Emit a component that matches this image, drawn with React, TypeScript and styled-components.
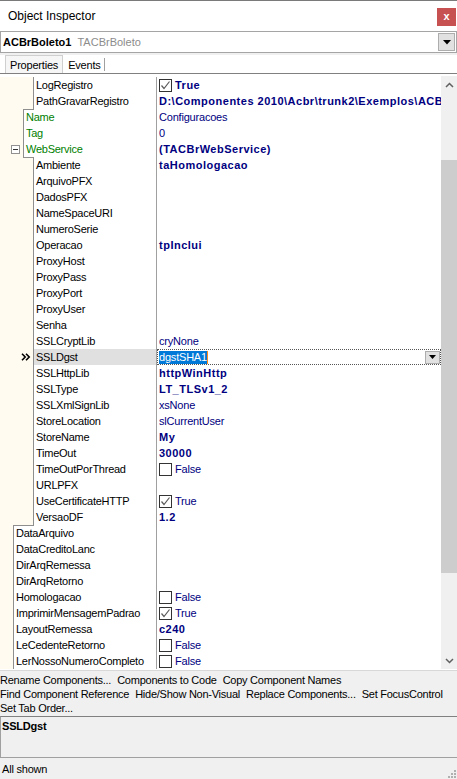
import React from "react";
import styled, { createGlobalStyle } from "styled-components";

const GlobalStyle = createGlobalStyle`
  html, body {
    margin: 0;
    padding: 0;
    background: #ffffff;
  }
  body {
    font-family: "Liberation Sans", Arial, sans-serif;
  }
  * {
    box-sizing: border-box;
  }
`;

type Value =
  | { kind: "text"; text: string; bold?: boolean }
  | { kind: "check"; checked: boolean; bold?: boolean }
  | { kind: "edit"; text: string }
  | { kind: "none" };

type Prop = {
  name: string;
  level: 0 | 1 | 2;
  value: Value;
  green?: boolean;
  expanded?: boolean;
  selected?: boolean;
};

const none: Value = { kind: "none" };
const t = (text: string, bold = false): Value => ({ kind: "text", text, bold });
const c = (checked: boolean, bold = false): Value => ({ kind: "check", checked, bold });

const props: Prop[] = [
  { name: "LogRegistro", level: 2, value: c(true, true) },
  {
    name: "PathGravarRegistro",
    level: 2,
    value: t("D:\\Componentes 2010\\Acbr\\trunk2\\Exemplos\\ACBrBoleto", true),
  },
  { name: "Name", level: 1, green: true, value: t("Configuracoes") },
  { name: "Tag", level: 1, green: true, value: t("0") },
  { name: "WebService", level: 1, green: true, expanded: true, value: t("(TACBrWebService)", true) },
  { name: "Ambiente", level: 2, value: t("taHomologacao", true) },
  { name: "ArquivoPFX", level: 2, value: none },
  { name: "DadosPFX", level: 2, value: none },
  { name: "NameSpaceURI", level: 2, value: none },
  { name: "NumeroSerie", level: 2, value: none },
  { name: "Operacao", level: 2, value: t("tpInclui", true) },
  { name: "ProxyHost", level: 2, value: none },
  { name: "ProxyPass", level: 2, value: none },
  { name: "ProxyPort", level: 2, value: none },
  { name: "ProxyUser", level: 2, value: none },
  { name: "Senha", level: 2, value: none },
  { name: "SSLCryptLib", level: 2, value: t("cryNone") },
  { name: "SSLDgst", level: 2, selected: true, value: { kind: "edit", text: "dgstSHA1" } },
  { name: "SSLHttpLib", level: 2, value: t("httpWinHttp", true) },
  { name: "SSLType", level: 2, value: t("LT_TLSv1_2", true) },
  { name: "SSLXmlSignLib", level: 2, value: t("xsNone") },
  { name: "StoreLocation", level: 2, value: t("slCurrentUser") },
  { name: "StoreName", level: 2, value: t("My", true) },
  { name: "TimeOut", level: 2, value: t("30000", true) },
  { name: "TimeOutPorThread", level: 2, value: c(false) },
  { name: "URLPFX", level: 2, value: none },
  { name: "UseCertificateHTTP", level: 2, value: c(true) },
  { name: "VersaoDF", level: 2, value: t("1.2", true) },
  { name: "DataArquivo", level: 0, value: none },
  { name: "DataCreditoLanc", level: 0, value: none },
  { name: "DirArqRemessa", level: 0, value: none },
  { name: "DirArqRetorno", level: 0, value: none },
  { name: "Homologacao", level: 0, value: c(false) },
  { name: "ImprimirMensagemPadrao", level: 0, value: c(true) },
  { name: "LayoutRemessa", level: 0, value: t("c240", true) },
  { name: "LeCedenteRetorno", level: 0, value: c(false) },
  { name: "LerNossoNumeroCompleto", level: 0, value: c(false) },
];

const gutterWidth = [14, 24, 34];

const actions = [
  "Rename Components...",
  "Components to Code",
  "Copy Component Names",
  "Find Component Reference",
  "Hide/Show Non-Visual",
  "Replace Components...",
  "Set FocusControl",
  "Set Tab Order...",
];

export default function App() {
  return (
    <Window>
      <GlobalStyle />
      <TitleBar>
        <Title>Object Inspector</Title>
        <CloseButton>x</CloseButton>
      </TitleBar>

      <Combo>
        <ComboName>ACBrBoleto1</ComboName>
        <ComboType>TACBrBoleto</ComboType>
        <ComboButton>
          <svg width="8" height="5" viewBox="0 0 8 5">
            <polygon points="0,0 8,0 4,4.5" fill="#000" />
          </svg>
        </ComboButton>
      </Combo>

      <TabStrip>
        <Tab $active>Properties</Tab>
        <Tab>Events</Tab>
      </TabStrip>

      <GridArea>
        <Rows>
          {props.map((p, i) => {
            const w = gutterWidth[p.level];
            const prev = i === 0 ? w : gutterWidth[props[i - 1].level];
            return (
              <Row key={p.name}>
                <NameCol>
                  <Gutter $w={w} $prev={prev}>
                    {p.expanded && (
                      <ExpandBox>
                        <ExpandLine />
                      </ExpandBox>
                    )}
                    {p.selected && (
                      <Marker width="10" height="8" viewBox="0 0 10 8">
                        <path d="M1 0.8 L4.2 4 L1 7.2 M5 0.8 L8.2 4 L5 7.2" fill="none" stroke="#000" strokeWidth="1.6" />
                      </Marker>
                    )}
                  </Gutter>
                  <NameCell $selected={!!p.selected} $green={!!p.green}>
                    {p.name}
                  </NameCell>
                </NameCol>
                <ValueCell $edit={p.value.kind === "edit"}>
                  <ValueContent value={p.value} />
                </ValueCell>
              </Row>
            );
          })}
        </Rows>
        <Scrollbar>
          <ScrollArrow>
            <svg width="9" height="6" viewBox="0 0 9 6">
              <polyline points="1,5 4.5,1.5 8,5" fill="none" stroke="#606060" strokeWidth="1.5" />
            </svg>
          </ScrollArrow>
          <Track>
            <Thumb $top={67} $height={413} />
          </Track>
          <ScrollArrow>
            <svg width="9" height="6" viewBox="0 0 9 6">
              <polyline points="1,1 4.5,4.5 8,1" fill="none" stroke="#606060" strokeWidth="1.5" />
            </svg>
          </ScrollArrow>
        </Scrollbar>
      </GridArea>

      <Actions>
        {actions.map((a) => (
          <ActionLink key={a}>{a}</ActionLink>
        ))}
      </Actions>

      <Description>SSLDgst</Description>

      <StatusBar>
        <span>All shown</span>
        <Grip width="8" height="8" viewBox="0 0 8 8">
          <rect x="6" y="0" width="2" height="2" fill="#b0b0b0" />
          <rect x="3" y="3" width="2" height="2" fill="#b0b0b0" />
          <rect x="6" y="3" width="2" height="2" fill="#b0b0b0" />
          <rect x="0" y="6" width="2" height="2" fill="#b0b0b0" />
          <rect x="3" y="6" width="2" height="2" fill="#b0b0b0" />
          <rect x="6" y="6" width="2" height="2" fill="#b0b0b0" />
        </Grip>
      </StatusBar>
    </Window>
  );
}

function ValueContent({ value }: { value: Value }) {
  if (value.kind === "text") {
    return <ValueText $bold={!!value.bold}>{value.text}</ValueText>;
  }
  if (value.kind === "check") {
    return (
      <>
        <CheckBox>
          {value.checked && (
            <svg width="11" height="11" viewBox="0 0 11 11">
              <polyline points="1.5,5.5 4,8.5 9.5,1.5" fill="none" stroke="#5a5a5a" strokeWidth="1.2" />
            </svg>
          )}
        </CheckBox>
        <ValueText $bold={!!value.bold}>{value.checked ? "True" : "False"}</ValueText>
      </>
    );
  }
  if (value.kind === "edit") {
    return (
      <EditBox>
        <Selection>{value.text}</Selection>
        <Caret />
        <EditButton>
          <svg width="7" height="4" viewBox="0 0 7 4">
            <polygon points="0,0 7,0 3.5,4" fill="#000" />
          </svg>
        </EditButton>
      </EditBox>
    );
  }
  return null;
}

const Window = styled.div`
  width: 457px;
  height: 779px;
  display: flex;
  flex-direction: column;
  background: #ffffff;
  overflow: hidden;
  font-size: 11px;
  color: #000;
`;

const TitleBar = styled.div`
  height: 31px;
  flex: none;
  border-top: 1px solid #7a7a7a;
  display: flex;
  align-items: center;
  justify-content: space-between;
  padding: 0 1px 0 8px;
`;

const Title = styled.span`
  font-size: 12px;
  color: #000;
`;

const CloseButton = styled.div`
  width: 19px;
  height: 18px;
  margin-top: 2px;
  background: #c75050;
  color: #ffffff;
  font-weight: bold;
  font-size: 11px;
  display: flex;
  align-items: center;
  justify-content: center;
  padding-bottom: 2px;
`;

const Combo = styled.div`
  height: 22px;
  flex: none;
  border: 1px solid #a5a5a5;
  display: flex;
  align-items: center;
  padding-left: 2px;
`;

const ComboName = styled.span`
  font-weight: bold;
  font-size: 11px;
`;

const ComboType = styled.span`
  margin-left: 6px;
  color: #8c8c8c;
  font-size: 11px;
`;

const ComboButton = styled.div`
  margin-left: auto;
  margin-right: 1px;
  width: 17px;
  height: 18px;
  background: #e1e1e1;
  border: 1px solid #adadad;
  display: flex;
  align-items: center;
  justify-content: center;
`;

const TabStrip = styled.div`
  height: 21px;
  flex: none;
  border-top: 2px solid #f0f0f0;
  border-bottom: 1px solid #808080;
  display: flex;
  align-items: flex-end;
  padding-left: 5px;
`;

const Tab = styled.div<{ $active?: boolean }>`
  height: 18px;
  display: flex;
  align-items: center;
  padding: 0 4px;
  font-size: 11px;
  letter-spacing: -0.2px;
  border: 1px solid ${(p) => (p.$active ? "#cfcfcf" : "transparent")};
  border-bottom: none;
  background: ${(p) => (p.$active ? "#f6f6f6" : "transparent")};
  ${(p) =>
    !p.$active &&
    `
    position: relative;
    &::after {
      content: "";
      position: absolute;
      right: 0;
      top: 2px;
      height: 13px;
      border-right: 1px solid #a0a0a0;
    }
  `}
`;

const GridArea = styled.div`
  height: 596px;
  flex: none;
  display: flex;
`;

const Rows = styled.div`
  flex: 1;
  min-width: 0;
  padding-top: 3px;
  display: flex;
  flex-direction: column;
`;

const Row = styled.div`
  height: 16px;
  flex: none;
  display: flex;
`;

const NameCol = styled.div`
  width: 156px;
  flex: none;
  display: flex;
`;

const Gutter = styled.div<{ $w: number; $prev: number }>`
  position: relative;
  flex: none;
  width: ${(p) => p.$w}px;
  height: 100%;
  background: #fffbf0;
  border-right: 1px solid #8e8e8e;
  display: flex;
  align-items: center;
  ${(p) =>
    p.$prev !== p.$w &&
    `
    &::before {
      content: "";
      position: absolute;
      top: 0;
      left: ${Math.min(p.$w, p.$prev) - 1}px;
      width: ${Math.abs(p.$w - p.$prev) + 1}px;
      border-top: 1px solid #8e8e8e;
    }
  `}
`;

const ExpandBox = styled.div`
  margin-left: 11px;
  width: 9px;
  height: 9px;
  border: 1px solid #919191;
  background: #ffffff;
  display: flex;
  align-items: center;
  justify-content: center;
`;

const ExpandLine = styled.div`
  width: 5px;
  height: 1px;
  background: #333333;
`;

const Marker = styled.svg`
  margin-left: 21px;
`;

const NameCell = styled.div<{ $selected: boolean; $green: boolean }>`
  flex: 1;
  min-width: 0;
  padding-left: 2px;
  line-height: 16px;
  white-space: nowrap;
  overflow: hidden;
  letter-spacing: -0.25px;
  color: ${(p) => (p.$green ? "#008000" : "#000000")};
  background: ${(p) => (p.$selected ? "#e0e0e0" : "transparent")};
`;

const ValueCell = styled.div<{ $edit: boolean }>`
  flex: 1;
  min-width: 0;
  border-left: 1px solid #a0a0a0;
  padding-left: ${(p) => (p.$edit ? 0 : 2)}px;
  display: flex;
  align-items: center;
  overflow: hidden;
  white-space: nowrap;
  color: #000080;
`;

const ValueText = styled.span<{ $bold: boolean }>`
  line-height: 16px;
  font-weight: ${(p) => (p.$bold ? "bold" : "normal")};
  letter-spacing: ${(p) => (p.$bold ? "0.5px" : "-0.2px")};
`;

const CheckBox = styled.div`
  width: 13px;
  height: 13px;
  flex: none;
  margin-right: 3px;
  border: 1px solid #333333;
  background: #ffffff;
  display: flex;
  align-items: center;
  justify-content: center;
`;

const EditBox = styled.div`
  flex: 1;
  height: 16px;
  border: 1px dotted #555555;
  display: flex;
  align-items: center;
  padding-left: 1px;
`;

const Selection = styled.span`
  background: #0078d7;
  color: #ffffff;
  line-height: 13px;
  letter-spacing: -0.2px;
`;

const Caret = styled.span`
  width: 1px;
  height: 13px;
  background: #ff8c1a;
`;

const EditButton = styled.div`
  margin-left: auto;
  width: 15px;
  height: 13px;
  background: #e1e1e1;
  border: 1px solid #adadad;
  display: flex;
  align-items: center;
  justify-content: center;
`;

const Scrollbar = styled.div`
  width: 16px;
  flex: none;
  margin-top: 2px;
  height: 593px;
  background: #f0f0f0;
  display: flex;
  flex-direction: column;
`;

const ScrollArrow = styled.div`
  height: 17px;
  flex: none;
  display: flex;
  align-items: center;
  justify-content: center;
`;

const Track = styled.div`
  flex: 1;
  display: flex;
  flex-direction: column;
`;

const Thumb = styled.div<{ $top: number; $height: number }>`
  margin-top: ${(p) => p.$top}px;
  height: ${(p) => p.$height}px;
  background: #cdcdcd;
`;

const Actions = styled.div`
  height: 46px;
  flex: none;
  background: #f0f0f0;
  border-top: 1px solid #d8d8d8;
  padding: 2px 0 0 0;
  display: flex;
  flex-wrap: wrap;
  align-content: flex-start;
  column-gap: 6px;
`;

const ActionLink = styled.span`
  line-height: 14px;
  letter-spacing: -0.25px;
  white-space: nowrap;
`;

const Description = styled.div`
  height: 41px;
  flex: none;
  background: #f0f0f0;
  border-top: 1px solid #808080;
  border-left: 1px solid #a0a0a0;
  padding: 2px 0 0 1px;
  font-weight: bold;
  line-height: 14px;
  letter-spacing: -0.2px;
`;

const StatusBar = styled.div`
  flex: 1;
  background: #f0f0f0;
  border-top: 1px solid #a0a0a0;
  display: flex;
  align-items: center;
  justify-content: space-between;
  padding: 0 1px 0 2px;
  letter-spacing: -0.2px;
`;

const Grip = styled.svg`
  align-self: flex-end;
  margin-bottom: 1px;
`;
